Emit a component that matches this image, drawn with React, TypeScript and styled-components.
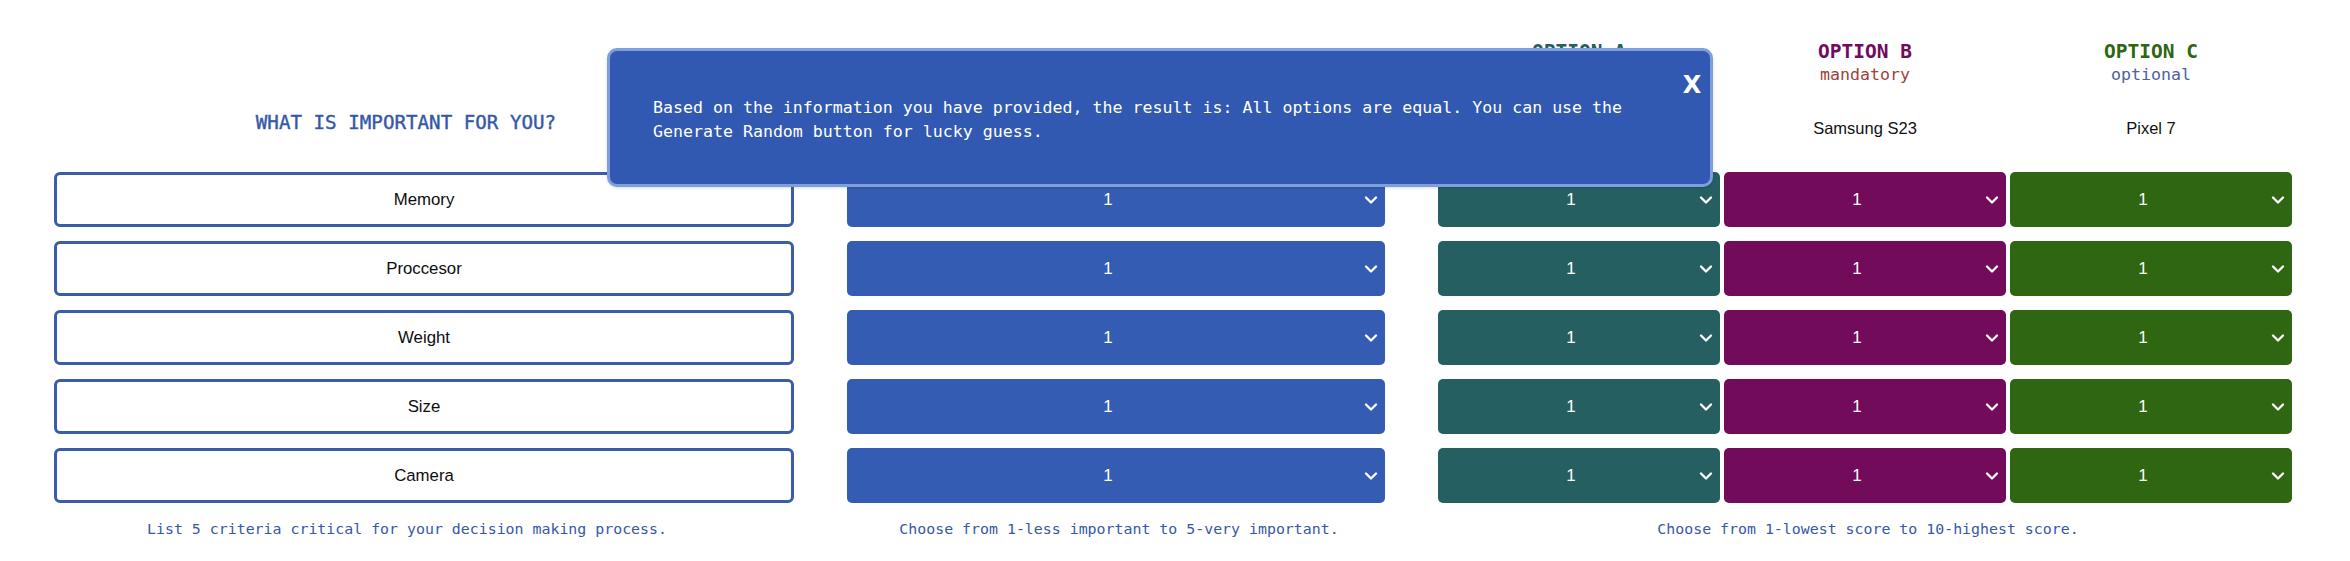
import React from "react";
import styled, { createGlobalStyle } from "styled-components";
import { ChevronDown } from "lucide-react";

const Colors = {
  Blue: "#335cb2",
  Ink: "#3658a7",
  Teal: "#265f62",
  Purple: "#720b5a",
  Green: "#2e6612",
  Mandatory: "#a0423c",
  Optional: "#51609f",
};

const MONO = `"DejaVu Sans Mono", "Liberation Mono", monospace`;
const SANS = `"Liberation Sans", Arial, sans-serif`;

const criteria = ["Memory", "Proccesor", "Weight", "Size", "Camera"];

const options = [
  { title: "OPTION A", color: Colors.Teal, note: "mandatory", name: "iPhone 14" },
  { title: "OPTION B", color: Colors.Purple, note: "mandatory", name: "Samsung S23" },
  { title: "OPTION C", color: Colors.Green, note: "optional", name: "Pixel 7" },
];

const range = (n: number) => Array.from({ length: n }, (_, i) => i + 1);

const GlobalStyle = createGlobalStyle`
  body {
    margin: 0;
    background: #ffffff;
    font-family: ${SANS};
  }
`;

interface ScoreSelectProps {
  bg: string;
  max: number;
}

const ScoreSelect = ({ bg, max }: ScoreSelectProps) => (
  <SelectWrap>
    <Select $bg={bg} defaultValue="1">
      {range(max).map(n => (
        <option key={n} value={n}>
          {n}
        </option>
      ))}
    </Select>
    <Chevron size={20} strokeWidth={2.8} />
  </SelectWrap>
);

export default function App() {
  return (
    <>
      <GlobalStyle />
      <Page>
        <HeaderCell>
          <Heading>WHAT IS IMPORTANT FOR YOU?</Heading>
        </HeaderCell>
        <HeaderCell />
        <OptionGrid>
          {options.map(o => (
            <OptionHead key={o.title}>
              <OptionTitle $color={o.color}>{o.title}</OptionTitle>
              <OptionNote $optional={o.note === "optional"}>{o.note}</OptionNote>
              <OptionName>{o.name}</OptionName>
            </OptionHead>
          ))}
        </OptionGrid>

        {criteria.map(c => (
          <React.Fragment key={c}>
            <CriteriaInput defaultValue={c} />
            <ScoreSelect bg={Colors.Blue} max={5} />
            <OptionGrid>
              {options.map(o => (
                <ScoreSelect key={o.title} bg={o.color} max={10} />
              ))}
            </OptionGrid>
          </React.Fragment>
        ))}

        <Hint $shift>List 5 criteria critical for your decision making process.</Hint>
        <Hint>Choose from 1-less important to 5-very important.</Hint>
        <Hint>Choose from 1-lowest score to 10-highest score.</Hint>

        <ResultModal>
          <ResultText>
            Based on the information you have provided, the result is: All options are equal. You can use the
            Generate Random button for lucky guess.
          </ResultText>
          <CloseButton>X</CloseButton>
        </ResultModal>
      </Page>
    </>
  );
}

const Page = styled.div`
  position: relative;
  box-sizing: border-box;
  width: 2350px;
  padding-left: 54px;
  display: grid;
  grid-template-columns: 740px 538px 854px;
  grid-template-rows: 158px repeat(5, 55px) auto;
  column-gap: 53px;
  row-gap: 14px;
`;

const HeaderCell = styled.div`
  display: flex;
  flex-direction: column;
  justify-content: flex-end;
  padding: 0 36px 23px 0;
`;

const Heading = styled.h2`
  margin: 0;
  text-align: center;
  font-family: ${MONO};
  font-size: 19.2px;
  font-weight: 400;
  line-height: 24px;
  color: ${Colors.Ink};
  -webkit-text-stroke: 0.4px ${Colors.Ink};
`;

const OptionGrid = styled.div`
  display: grid;
  grid-template-columns: repeat(3, 1fr);
  column-gap: 4px;
`;

const OptionHead = styled.div`
  display: flex;
  flex-direction: column;
  align-items: center;
  padding-top: 40px;
`;

const OptionTitle = styled.div<{ $color: string }>`
  font-family: ${MONO};
  font-size: 19.5px;
  font-weight: 700;
  line-height: 24px;
  color: ${p => p.$color};
`;

const OptionNote = styled.div<{ $optional?: boolean }>`
  font-family: ${MONO};
  font-size: 16.6px;
  line-height: 22px;
  color: ${p => (p.$optional ? Colors.Optional : Colors.Mandatory)};
`;

const OptionName = styled.div`
  margin-top: 31px;
  font-family: ${SANS};
  font-size: 16.5px;
  line-height: 22px;
  color: #111;
`;

const CriteriaInput = styled.input`
  box-sizing: border-box;
  width: 100%;
  height: 100%;
  margin: 0;
  border: 3px solid #3a5ca9;
  border-radius: 6px;
  background: #fff;
  text-align: center;
  font-family: ${SANS};
  font-size: 16.8px;
  color: #0d0d0d;
  outline: none;
`;

const SelectWrap = styled.div`
  position: relative;
  height: 100%;
`;

const Select = styled.select<{ $bg: string }>`
  appearance: none;
  -webkit-appearance: none;
  box-sizing: border-box;
  width: 100%;
  height: 100%;
  margin: 0;
  padding: 0 30px 0 14px;
  border: 0;
  border-radius: 5px;
  background: ${p => p.$bg};
  color: #fff;
  font-family: ${SANS};
  font-size: 17px;
  text-align: center;
  text-align-last: center;
  outline: none;
`;

const Chevron = styled(ChevronDown)`
  position: absolute;
  right: 4px;
  top: 50%;
  transform: translateY(-50%);
  color: #fff;
  pointer-events: none;
`;

const Hint = styled.div<{ $shift?: boolean }>`
  padding-right: ${p => (p.$shift ? "34px" : "0")};
  padding-left: ${p => (p.$shift ? "0" : "6px")};
  text-align: center;
  font-family: ${MONO};
  font-size: 14.9px;
  line-height: 24px;
  color: ${Colors.Ink};
`;

const ResultModal = styled.div`
  position: absolute;
  left: 607px;
  top: 48px;
  box-sizing: border-box;
  width: 1106px;
  height: 139px;
  display: flex;
  align-items: center;
  padding: 4px 70px 0 43px;
  background: #3159b1;
  border: 3px solid #7e9fdc;
  border-radius: 10px;
  box-shadow: 0 1px 3px rgba(0, 0, 0, 0.15);
`;

const ResultText = styled.p`
  margin: 0;
  font-family: ${MONO};
  font-size: 16.6px;
  line-height: 24px;
  color: #fff;
`;

const CloseButton = styled.button`
  position: absolute;
  top: 21px;
  right: 7px;
  width: 22px;
  padding: 0;
  border: 0;
  background: transparent;
  color: #fff;
  font-family: "DejaVu Sans", ${SANS};
  font-size: 24px;
  font-weight: 700;
  line-height: 26px;
  cursor: pointer;
`;
